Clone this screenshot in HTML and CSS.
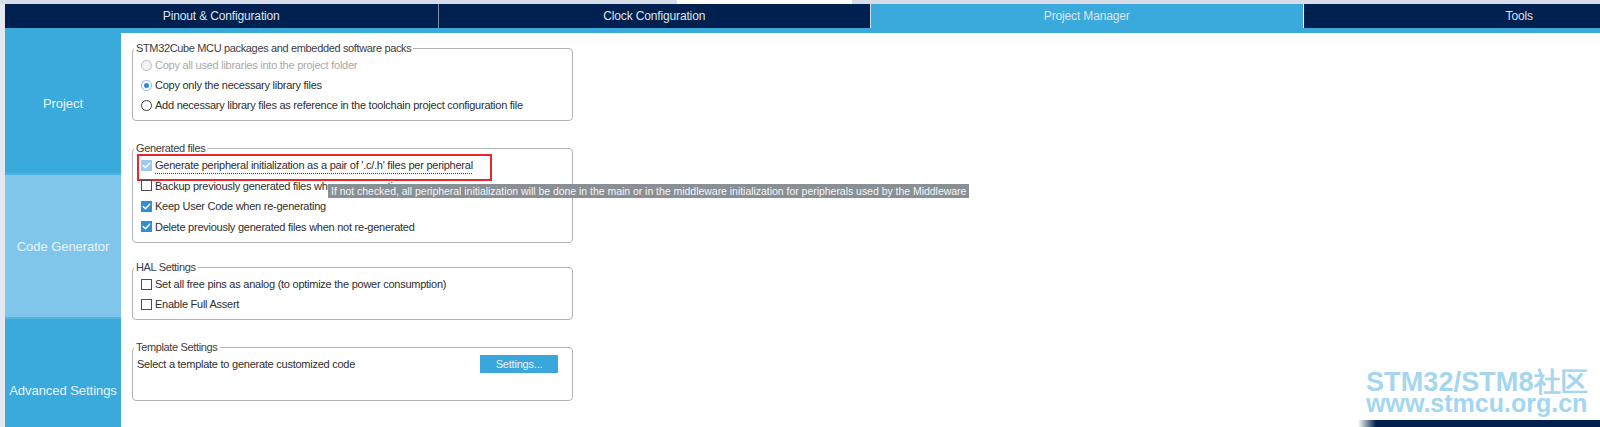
FILE: index.html
```html
<!DOCTYPE html>
<html lang="en">
<head>
<meta charset="utf-8">
<title>Project Manager</title>
<link rel="stylesheet" href="styles.css">
</head>
<body>
<div class="topline"><span class="topline-gap"></span></div>
<div class="frame">
  <div class="edge"></div>
  <div class="main">
    <nav class="tabs">
      <div class="tab">Pinout &amp; Configuration</div>
      <div class="tab">Clock Configuration</div>
      <div class="tab active">Project Manager</div>
      <div class="tab after-active">Tools</div>
    </nav>
    <div class="band"></div>
    <div class="workspace">
      <aside class="sidebar">
        <div class="nav-item">Project</div>
        <div class="nav-item current">Code Generator</div>
        <div class="nav-item">Advanced Settings</div>
      </aside>
      <section class="content">
        <fieldset class="group">
          <legend>STM32Cube MCU packages and embedded software packs</legend>
          <div class="opt disabled"><span class="radio off"></span><span>Copy all used libraries into the project folder</span></div>
          <div class="opt"><span class="radio on"></span><span>Copy only the necessary library files</span></div>
          <div class="opt"><span class="radio"></span><span>Add necessary library files as reference in the toolchain project configuration file</span></div>
        </fieldset>

        <fieldset class="group generated">
          <legend>Generated files</legend>
          <div class="opt focused">
            <span class="check on dim"><svg viewBox="0 0 11 11"><path d="M2.3 5.6 L4.5 7.8 L8.7 3.2" /></svg></span>
            <span class="focus-label">Generate peripheral initialization as a pair of '.c/.h' files per peripheral</span>
            <span class="highlight"></span>
          </div>
          <div class="opt">
            <span class="check"></span><span>Backup previously generated files when re-generating</span>
            <span class="tooltip">If not checked, all peripheral initialization will be done in the main or in the middleware initialization for peripherals used by the Middleware</span>
          </div>
          <div class="opt"><span class="check on"><svg viewBox="0 0 11 11"><path d="M2.3 5.6 L4.5 7.8 L8.7 3.2" /></svg></span><span>Keep User Code when re-generating</span></div>
          <div class="opt"><span class="check on"><svg viewBox="0 0 11 11"><path d="M2.3 5.6 L4.5 7.8 L8.7 3.2" /></svg></span><span>Delete previously generated files when not re-generated</span></div>
        </fieldset>

        <fieldset class="group">
          <legend>HAL Settings</legend>
          <div class="opt"><span class="check"></span><span>Set all free pins as analog (to optimize the power consumption)</span></div>
          <div class="opt"><span class="check"></span><span>Enable Full Assert</span></div>
        </fieldset>

        <fieldset class="group template">
          <legend>Template Settings</legend>
          <div class="opt plain"><span>Select a template to generate customized code</span><button class="btn" type="button">Settings...</button></div>
        </fieldset>
      </section>
    </div>
  </div>
</div>
<div class="watermark">
  <div class="wm-title">STM32/STM8社区</div>
  <div class="wm-url">www.stmcu.org.cn</div>
</div>
<div class="footer-bar"></div>
</body>
</html>
```

FILE: styles.css
```css
html, body {
  margin: 0;
  padding: 0;
}

body {
  width: 1600px;
  height: 427px;
  overflow: hidden;
  position: relative;
  background: #ffffff;
  font-family: "Liberation Sans", Arial, sans-serif;
}

/* window chrome strip above the tab bar */
.topline {
  height: 4px;
  background: #d6dce8;
  display: flex;
}

.topline-gap {
  margin-left: 677px;
  width: 175px;
  background: #ffffff;
}

.frame {
  display: flex;
  height: 423px;
}

.edge {
  flex: none;
  width: 5px;
  background: #e5e8f1;
}

.main {
  flex: 1;
  min-width: 0;
  display: flex;
  flex-direction: column;
}

/* top level perspective tabs */
.tabs {
  display: flex;
  height: 24px;
  background: #00204f;
  overflow: hidden;
  flex: none;
}

.tab {
  flex: 0 0 432.5px;
  box-sizing: border-box;
  display: flex;
  align-items: center;
  justify-content: center;
  color: #dfe5ee;
  font-size: 12px;
  letter-spacing: -0.15px;
}

.tab + .tab {
  border-left: 1px solid #8191ad;
}

.tab.active {
  background: #3aa9dc;
  border-left-color: #d5dde9;
}

.tab.after-active {
  border-left-color: #ffffff;
}

.band {
  flex: none;
  height: 5px;
  background: #3aa9dc;
}

.workspace {
  flex: 1;
  min-height: 0;
  display: flex;
}

/* left navigation */
.sidebar {
  flex: none;
  width: 116px;
  display: flex;
  flex-direction: column;
  overflow: hidden;
}

.nav-item {
  flex: 0 0 140px;
  box-sizing: border-box;
  display: flex;
  align-items: center;
  justify-content: center;
  background: #3aa9dc;
  color: #e8f4fb;
  font-size: 13px;
  letter-spacing: -0.05px;
}

.nav-item + .nav-item {
  flex-basis: 144px;
  border-top: 2px solid #55b5e3;
}

.nav-item.current {
  background: #80c6ea;
  border-top-color: #4fb2e1;
}

/* settings panel */
.content {
  flex: 1;
  min-width: 0;
  display: flex;
  flex-direction: column;
  align-items: flex-start;
  gap: 20px;
  padding: 8px 0 0 11px;
}

.group {
  width: 441px;
  box-sizing: border-box;
  margin: 0;
  padding: 0 0 5px 0;
  min-width: 0;
  border: 1px solid #b3b3b3;
  border-radius: 4px;
}

.group legend {
  margin-left: 1px;
  padding: 0 2px;
  font-size: 11px;
  line-height: 14px;
  color: #3d3d3d;
  letter-spacing: -0.35px;
}

.group.generated {
  margin-bottom: -3px;
}

.group.generated .opt {
  height: 20.5px;
}

.group.template {
  padding-bottom: 26px;
}

.opt {
  position: relative;
  height: 20px;
  display: flex;
  align-items: center;
  gap: 3px;
  padding-left: 8px;
  font-size: 11px;
  color: #2e2e2e;
  letter-spacing: -0.25px;
  white-space: nowrap;
}

.opt.plain {
  padding-left: 4px;
  padding-right: 14px;
}

.opt.disabled {
  color: #a9a9a9;
}

/* check boxes */
.check {
  flex: none;
  width: 11px;
  height: 11px;
  box-sizing: border-box;
  border: 1px solid #4d4d4d;
  background: #ffffff;
  display: flex;
  align-items: center;
  justify-content: center;
}

.check svg {
  width: 11px;
  height: 11px;
  flex: none;
}

.check svg path {
  fill: none;
  stroke: #ffffff;
  stroke-width: 1.5;
  stroke-linecap: round;
  stroke-linejoin: round;
}

.check.on {
  background: #2f8fd6;
  border-color: #2f8fd6;
}

.check.on.dim {
  background: #9ccbed;
  border-color: #9ccbed;
}

/* radio buttons */
.radio {
  flex: none;
  width: 11px;
  height: 11px;
  box-sizing: border-box;
  border: 1px solid #3f3f3f;
  border-radius: 50%;
  background: #ffffff;
  display: flex;
  align-items: center;
  justify-content: center;
}

.radio.off {
  border-color: #bcbcbc;
  background: #f3f3f3;
}

.radio.on {
  border-color: #86bbe5;
}

.radio.on::after {
  content: "";
  width: 5px;
  height: 5px;
  border-radius: 50%;
  background: #2b8ad8;
}

.focus-label {
  text-decoration-line: underline;
  text-decoration-style: dotted;
  text-decoration-color: #444444;
  text-underline-offset: 4px;
}

/* red annotation frame around the first option */
.highlight {
  position: absolute;
  left: 4px;
  top: -1px;
  width: 355px;
  height: 27px;
  box-sizing: border-box;
  border: 2px solid #e8262c;
  pointer-events: none;
}

.tooltip {
  position: absolute;
  left: 195px;
  top: 8px;
  height: 14px;
  padding: 0 3px;
  background: #899095;
  color: #f4f5f6;
  font-size: 10.5px;
  line-height: 14px;
  letter-spacing: -0.03px;
  white-space: nowrap;
  z-index: 2;
}

.btn {
  margin-left: auto;
  width: 78px;
  height: 18px;
  padding: 0;
  border: 0;
  background: #3aa7dc;
  color: #eaf5fc;
  font-family: inherit;
  font-size: 11px;
  letter-spacing: -0.2px;
}

/* site watermark in the lower right corner */
.watermark {
  position: absolute;
  left: 1366px;
  top: 372px;
  color: #a4d6f0;
  font-weight: bold;
  line-height: 20px;
  white-space: nowrap;
}

.wm-title {
  font-size: 27px;
  letter-spacing: 0.1px;
  margin-bottom: 1px;
}

.wm-url {
  font-size: 25px;
}

.footer-bar {
  position: absolute;
  left: 1358px;
  top: 420px;
  width: 242px;
  height: 7px;
  background: linear-gradient(to right, rgba(0, 32, 79, 0), #00204f 18px);
}
```
